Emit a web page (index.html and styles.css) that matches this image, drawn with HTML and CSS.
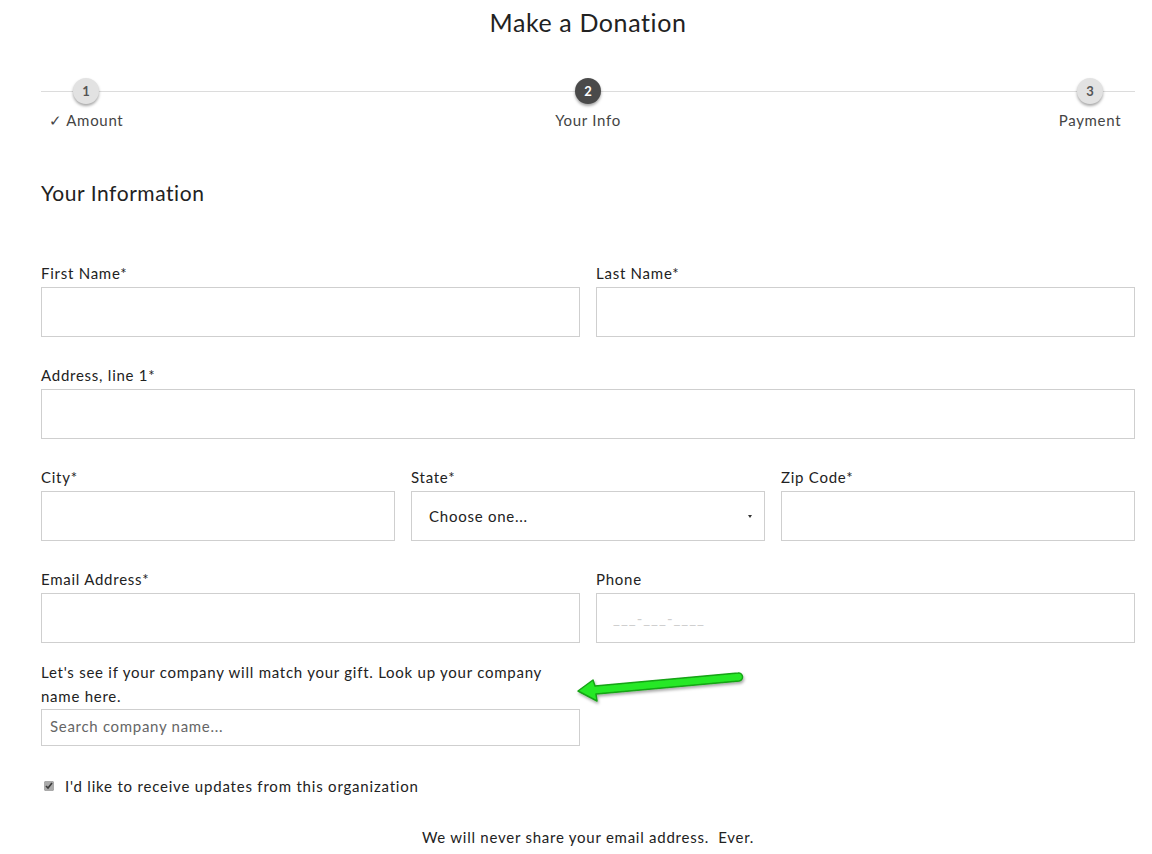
FILE: index.html
```html
<!DOCTYPE html>
<html lang="en">
<head>
<meta charset="utf-8">
<title>Make a Donation</title>
<link rel="stylesheet" href="styles.css">
</head>
<body>
<div class="page">
  <h1 class="title">Make a Donation</h1>

  <div class="steps">
    <div class="step">
      <span class="dot">1</span>
      <span class="step-label">✓ Amount</span>
    </div>
    <div class="step">
      <span class="dot dot-active">2</span>
      <span class="step-label">Your Info</span>
    </div>
    <div class="step">
      <span class="dot">3</span>
      <span class="step-label">Payment</span>
    </div>
  </div>

  <h2 class="section-title">Your Information</h2>

  <form class="form">
    <div class="row row-2">
      <div class="field">
        <label class="label">First Name*</label>
        <input class="input" type="text">
      </div>
      <div class="field">
        <label class="label">Last Name*</label>
        <input class="input" type="text">
      </div>
    </div>

    <div class="row">
      <div class="field">
        <label class="label">Address, line 1*</label>
        <input class="input" type="text">
      </div>
    </div>

    <div class="row row-3">
      <div class="field">
        <label class="label">City*</label>
        <input class="input" type="text">
      </div>
      <div class="field">
        <label class="label">State*</label>
        <div class="select">
          <span>Choose one...</span>
          <span class="caret"></span>
        </div>
      </div>
      <div class="field">
        <label class="label">Zip Code*</label>
        <input class="input" type="text">
      </div>
    </div>

    <div class="row row-2">
      <div class="field">
        <label class="label">Email Address*</label>
        <input class="input" type="text">
      </div>
      <div class="field">
        <label class="label">Phone</label>
        <input class="input input-phone" type="text" placeholder="___-___-____">
      </div>
    </div>

    <div class="row row-2 company-row">
      <div class="field">
        <p class="company-text">Let's see if your company will match your gift. Look up your company name here.</p>
        <input class="input input-search" type="text" placeholder="Search company name...">
      </div>
    </div>

    <label class="check">
      <input type="checkbox" checked>
      <span>I'd like to receive updates from this organization</span>
    </label>

    <p class="note">We will never share your email address.&nbsp; Ever.</p>
  </form>
</div>

<svg class="arrow" width="190" height="46" viewBox="0 0 190 46">
  <defs>
    <filter id="sh" x="-10%" y="-30%" width="120%" height="170%">
      <feDropShadow dx="1" dy="2" stdDeviation="1.5" flood-color="#000" flood-opacity="0.35"/>
    </filter>
  </defs>
  <path filter="url(#sh)" d="M8 27 L23 16 L25 22 L168 9 A4 4 0 0 1 169 17 L26 30 L27 37 Z"
        fill="#27e827" stroke="#14a314" stroke-width="1.5" stroke-linejoin="round"/>
</svg>
</body>
</html>
```

FILE: styles.css
```css
* {
  box-sizing: border-box;
}

body {
  margin: 0;
  background: #fff;
  font-family: "Lato", "Noto Sans", sans-serif;
  color: #222;
}

.page {
  width: 1094px;
  margin-left: 41px;
}

.title {
  margin: 7px 0 0;
  font-size: 25px;
  line-height: 30px;
  font-weight: 400;
  text-align: center;
  color: #222;
  letter-spacing: 0.6px;
}

.steps {
  margin-top: 41px;
  display: flex;
  justify-content: space-between;
  background: linear-gradient(#dcdcdc, #dcdcdc) no-repeat 0 13px / 100% 1px;
}

.step {
  width: 90px;
  display: flex;
  flex-direction: column;
  align-items: center;
}

.dot {
  width: 26px;
  height: 26px;
  border-radius: 50%;
  background: #e2e2e2;
  color: #555;
  font-size: 13px;
  font-weight: 700;
  display: flex;
  align-items: center;
  justify-content: center;
  box-shadow: 0 2px 3px rgba(0, 0, 0, 0.35);
}

.dot-active {
  background: #4a4a4a;
  color: #fff;
}

.step-label {
  margin-top: 6px;
  font-size: 15px;
  line-height: 20px;
  color: #444;
  white-space: nowrap;
  letter-spacing: 0.7px;
}

.section-title {
  margin: 49px 0 0;
  font-size: 21px;
  line-height: 28px;
  font-weight: 400;
  color: #222;
  letter-spacing: 0.55px;
}

.form {
  margin-top: 56px;
}

.row {
  display: grid;
  grid-template-columns: 1fr;
  column-gap: 16px;
  margin-bottom: 28px;
}

.row-2 {
  grid-template-columns: 1fr 1fr;
}

.row-3 {
  grid-template-columns: 1fr 1fr 1fr;
}

.field {
  display: flex;
  flex-direction: column;
}

.label {
  font-size: 15px;
  line-height: 20px;
  margin-bottom: 4px;
  color: #222;
  letter-spacing: 0.75px;
}

.input {
  height: 50px;
  border: 1px solid #cfcfcf;
  background: #fff;
  padding: 0 16px;
  font-family: inherit;
  font-size: 15px;
  color: #222;
  outline: none;
}

.input-phone::placeholder {
  color: #cfcfcf;
  letter-spacing: 1px;
}

.company-row {
  margin-top: -11px;
  margin-bottom: 30px;
}

.company-text {
  margin: 0 0 1px;
  font-size: 15px;
  line-height: 24px;
  color: #222;
  letter-spacing: 0.75px;
}

.input-search {
  height: 37px;
  padding: 0 8px 3px;
}

.input-search::placeholder {
  color: #666;
  letter-spacing: 0.7px;
}

.select {
  height: 50px;
  border: 1px solid #cfcfcf;
  display: flex;
  align-items: center;
  justify-content: space-between;
  padding: 0 12px 0 17px;
  font-size: 15px;
  color: #222;
  letter-spacing: 0.75px;
}

.caret {
  width: 0;
  height: 0;
  border-left: 2.5px solid transparent;
  border-right: 2.5px solid transparent;
  border-top: 3px solid #333;
}

.check {
  display: flex;
  align-items: center;
  gap: 11px;
  padding-left: 3px;
  font-size: 15px;
  line-height: 20px;
  color: #222;
  letter-spacing: 0.8px;
}

.check input {
  width: 10px;
  height: 10px;
  margin: 0;
  accent-color: #aaa;
}

.note {
  margin: 31px 0 0;
  text-align: center;
  font-size: 15px;
  line-height: 20px;
  color: #222;
  letter-spacing: 0.75px;
}

.arrow {
  position: absolute;
  left: 570px;
  top: 664px;
}
```
